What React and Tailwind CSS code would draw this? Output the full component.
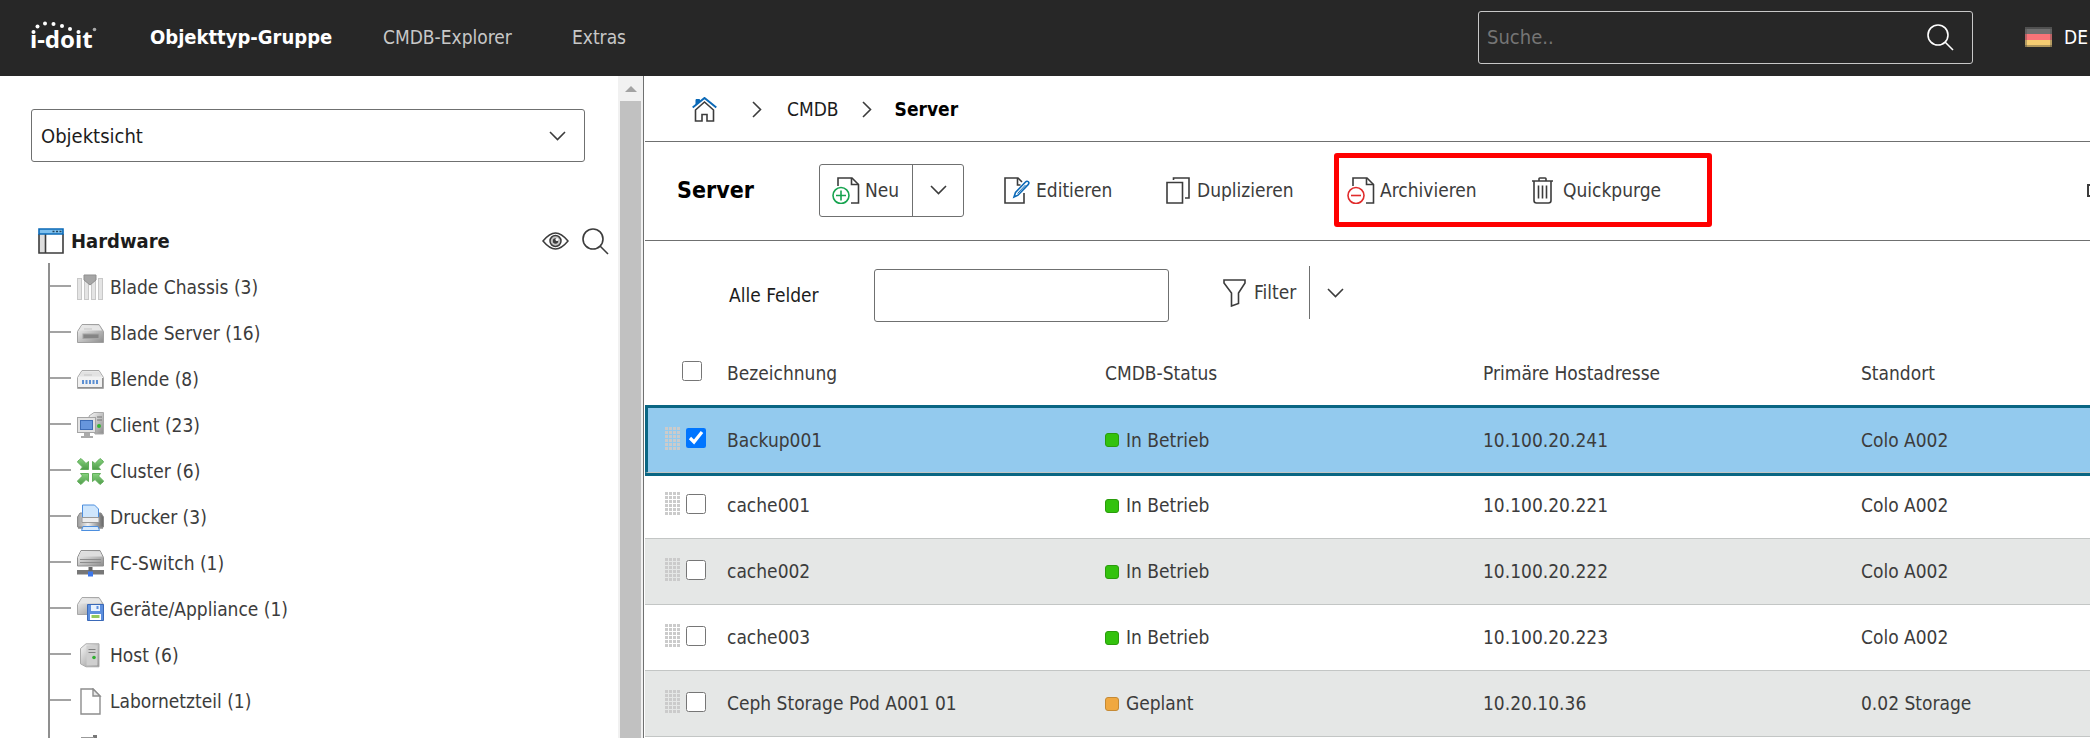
import { useState } from 'react'

const OBJECT_TYPES = [
  { name: 'Blade Chassis', count: 3, icon: ChassisIcon },
  { name: 'Blade Server', count: 16, icon: BladeServerIcon },
  { name: 'Blende', count: 8, icon: PanelIcon },
  { name: 'Client', count: 23, icon: ClientIcon },
  { name: 'Cluster', count: 6, icon: ClusterIcon },
  { name: 'Drucker', count: 3, icon: PrinterIcon },
  { name: 'FC-Switch', count: 1, icon: SwitchIcon },
  { name: 'Geräte/Appliance', count: 1, icon: ApplianceIcon },
  { name: 'Host', count: 6, icon: HostIcon },
  { name: 'Labornetzteil', count: 1, icon: BlankPageIcon },
]

const SERVERS = [
  { name: 'Backup001', status: 'In Betrieb', ip: '10.100.20.241', location: 'Colo A002' },
  { name: 'cache001', status: 'In Betrieb', ip: '10.100.20.221', location: 'Colo A002' },
  { name: 'cache002', status: 'In Betrieb', ip: '10.100.20.222', location: 'Colo A002' },
  { name: 'cache003', status: 'In Betrieb', ip: '10.100.20.223', location: 'Colo A002' },
  { name: 'Ceph Storage Pod A001 01', status: 'Geplant', ip: '10.20.10.36', location: '0.02 Storage' },
]

const STATUS_COLORS = {
  'In Betrieb': 'bg-[#33c20d] border-[#2a9c0c]',
  Geplant: 'bg-[#f0a840] border-[#c58a35]',
}

/* ---------- Icons ---------- */

function Logo() {
  return (
    <svg width="72" height="40" viewBox="0 0 72 40" fill="#fff" role="img" aria-label="i-doit">
      <text x="0" y="31" fontFamily="Noto Sans, sans-serif" fontWeight="700" fontSize="24">ı-doıt</text>
      <circle cx="3.500" cy="15" r="2" />
      <circle cx="7.500" cy="9.500" r="2" />
      <circle cx="15" cy="6.500" r="2" />
      <circle cx="23.500" cy="7" r="2" />
      <circle cx="32" cy="9" r="2" />
      <circle cx="40" cy="12" r="2" />
      <circle cx="48.500" cy="15" r="2" />
      <circle cx="64.500" cy="12.500" r="1.800" fill="#aaa" />
    </svg>
  )
}

function SearchIcon({ className }) {
  return (
    <svg width="27" height="27" viewBox="0 0 27 27" fill="none" stroke="currentColor" strokeWidth="1.600" className={className}>
      <circle cx="11" cy="11" r="10" />
      <path d="M18 18l8 8" />
    </svg>
  )
}

function EyeIcon() {
  return (
    <svg width="27" height="18" viewBox="0 0 27 18" fill="none" stroke="#3c3c3c" strokeWidth="1.500">
      <path d="M1 9C6 3 9.500 1 13.500 1S21 3 26 9c-5 6-8.500 8-12.500 8S6 15 1 9z" />
      <circle cx="13.500" cy="9" r="5.500" fill="#c4c4c4" />
      <circle cx="13.500" cy="9" r="2.700" fill="#3c3c3c" stroke="none" />
      <circle cx="15" cy="7.500" r="1.500" fill="#fff" stroke="none" />
    </svg>
  )
}

function ChevronDown({ className }) {
  return (
    <svg width="17" height="10" viewBox="0 0 17 10" fill="none" stroke="#3c3c3c" strokeWidth="1.600" className={className}>
      <path d="M1 1l7.500 7.500L16 1" />
    </svg>
  )
}

function ChevronRight() {
  return (
    <svg width="10" height="17" viewBox="0 0 10 17" fill="none" stroke="#3c3c3c" strokeWidth="1.600">
      <path d="M1 1l7.500 7.500L1 16" />
    </svg>
  )
}

function FlagDe() {
  return (
    <svg width="27" height="20" viewBox="0 0 27 20">
      <rect width="27" height="7" fill="#707070" />
      <rect y="7" width="27" height="6" fill="#f77478" />
      <rect y="13" width="27" height="7" fill="#f5cc72" />
      <path d="M1 20V1h25v19" fill="none" stroke="#444" strokeWidth="2" opacity=".350" />
      <path d="M0 1h27M0 19h27" stroke="#333" strokeWidth="2" opacity=".350" />
    </svg>
  )
}

function HomeIcon() {
  return (
    <svg width="25" height="25" viewBox="0 0 25 25" fill="none" strokeWidth="1.600">
      <path d="M3.500 13v11H10v-6.500h5V24h6.500V13L12.500 5z" stroke="#3c3c3c" />
      <path d="M.7 10.500L12.500 1l11.800 9.500" stroke="#0b69b7" strokeWidth="2" />
      <path d="M4 7.500V2.500h3.500v2z" fill="#0b69b7" stroke="#0b69b7" strokeWidth="1" />
    </svg>
  )
}

function NewIcon() {
  return (
    <svg width="28" height="27" viewBox="0 0 28 27" fill="none" strokeWidth="1.600">
      <path d="M6 9V1h14l6.500 6.500V26H19" stroke="#3c3c3c" />
      <path d="M19.500 1v6.500h7" stroke="#3c3c3c" />
      <circle cx="9" cy="18.500" r="8" stroke="#16a34f" />
      <path d="M9 13.500v10M4 18.500h10" stroke="#16a34f" />
    </svg>
  )
}

function ArchiveIcon() {
  return (
    <svg width="28" height="27" viewBox="0 0 28 27" fill="none" strokeWidth="1.600">
      <path d="M6 9V1h14l6.500 6.500V26H19" stroke="#3c3c3c" />
      <path d="M19.500 1v6.500h7" stroke="#3c3c3c" />
      <circle cx="9" cy="18.500" r="8" stroke="#e02b2b" />
      <path d="M4 18.500h10" stroke="#e02b2b" />
    </svg>
  )
}

function EditIcon() {
  return (
    <svg width="26" height="27" viewBox="0 0 26 27" fill="none" strokeWidth="1.600">
      <path d="M20 16v10H1V1h13l4 4" stroke="#3c3c3c" />
      <path d="M13.500 1v7h3" stroke="#3c3c3c" />
      <path d="M10 20l1.500-4.500L21.500 5c1-1 2-1 2.800-.2s.7 1.800-.2 2.800L14 18.200z" stroke="#0b69b7" />
      <path d="M13.500 16.500l8-8.500" stroke="#0b69b7" strokeWidth="1" />
    </svg>
  )
}

function DuplicateIcon() {
  return (
    <svg width="24" height="27" viewBox="0 0 24 27" fill="none" stroke="#3c3c3c" strokeWidth="1.600">
      <path d="M1 5.500h15.500V26H1z" />
      <path d="M7.500 3V1H23v20h-4" />
    </svg>
  )
}

function TrashIcon() {
  return (
    <svg width="21" height="27" viewBox="0 0 21 27" fill="none" stroke="#3c3c3c" strokeWidth="1.600">
      <path d="M0 4h21M7 4V1.800Q7 1 7.800 1h5.400q.8 0 .8.800V4M2 4v19.500Q2 26 4.500 26h12q2.500 0 2.500-2.500V4" />
      <path d="M6.500 8.500v13M10.500 8.500v13M14.500 8.500v13" />
    </svg>
  )
}

function FilterIcon() {
  return (
    <svg width="23" height="28" viewBox="0 0 23 28" fill="none" stroke="#3c3c3c" strokeWidth="1.600">
      <path d="M1 1h21v3l-6.500 10v10.500L8.500 27V14L1 4z" />
    </svg>
  )
}

function GroupIcon() {
  return (
    <svg width="26" height="26" viewBox="0 0 26 26" fill="none">
      <path d="M1 6h6v19H1z" fill="#dedede" />
      <path d="M1 6v19h24V6M7.500 6v19" stroke="#3c3c3c" strokeWidth="1.600" />
      <path d="M1 1h24v5H1z" fill="#7ec0ee" stroke="#0b69b7" strokeWidth="1.600" />
      <path d="M14.500 3.500h2M18 3.500h2M21.500 3.500h2" stroke="#23455e" strokeWidth="1.500" />
    </svg>
  )
}

function Gradients() {
  return (
    <svg width="0" height="0" className="absolute" aria-hidden="true">
      <defs>
        <linearGradient id="metal" x1="0" y1="0" x2="1" y2="1">
          <stop offset="0" stopColor="#fafafa" />
          <stop offset="1" stopColor="#8c8c8c" />
        </linearGradient>
        <linearGradient id="metalH" x1="0" y1="0" x2="1" y2="0">
          <stop offset="0" stopColor="#999" />
          <stop offset=".400" stopColor="#f0f0f0" />
          <stop offset="1" stopColor="#666" />
        </linearGradient>
        <linearGradient id="green" x1="0" y1="0" x2="0" y2="1">
          <stop offset="0" stopColor="#86d37e" />
          <stop offset="1" stopColor="#4f9c4a" />
        </linearGradient>
      </defs>
    </svg>
  )
}

function ChassisIcon() {
  return (
    <svg width="27" height="27" viewBox="0 0 27 27">
      {[0, 7, 14, 21].map((x) => (
        <rect key={x} x={x + 0.5} y="4.500" width="4" height="21" fill="#e4e4e4" stroke="#c8c8c8" />
      ))}
      <path d="M7 1h12v5l-6 5-6-5z" fill="#a6a6a6" stroke="#8f8f8f" />
    </svg>
  )
}

function BladeServerIcon() {
  return (
    <svg width="27" height="19" viewBox="0 0 27 19">
      <path d="M5 .5h17l4.500 7v11H.5v-11z" fill="url(#metal)" stroke="#a0a0a0" />
      <path d="M5 1.500h17l3 5H2z" fill="#e6e6e6" />
      <path d="M7 5h8" stroke="#c5c5c5" />
      <rect x="6" y="10" width="16" height="4.500" fill="#858585" stroke="#a5a5a5" />
    </svg>
  )
}

function PanelIcon() {
  return (
    <svg width="27" height="19" viewBox="0 0 27 19">
      <path d="M5 .5h17l4.500 7v11H.5v-11z" fill="#f1f1f1" stroke="#a8a8a8" />
      <path d="M5 1.500h17l3 5H2z" fill="#e2e2e2" />
      <path d="M7 5h8" stroke="#c5c5c5" />
      <path d="M6 10v4M9.500 10v4M13 10v4M16.500 10v4M20 10v4" stroke="#5c8fd2" strokeWidth="2" />
      <path d="M1 17.500h25M25.500 8v10" stroke="#8f8f8f" />
    </svg>
  )
}

function ClientIcon() {
  return (
    <svg width="27" height="27" viewBox="0 0 27 27">
      <path d="M12 4l5-3.500h9.500V22H18z" fill="url(#metal)" stroke="#aaa" />
      <path d="M20 5h5M20 8h5" stroke="#777" />
      <circle cx="22" cy="14" r="2" fill="#33b533" />
      <rect x=".5" y="5.500" width="18" height="15" fill="#e2e2e2" stroke="#a5a5a5" />
      <rect x="3.500" y="8.500" width="12" height="9" fill="#6796dc" stroke="#3d6cb5" />
      <path d="M7 21h6v3h3v2H4v-2h3z" fill="#aaa" />
    </svg>
  )
}

function ClusterIcon() {
  return (
    <svg width="27" height="27" viewBox="0 0 27 27" fill="url(#green)" stroke="#63ae5c">
      <path d="M1 3l3-2.500 5 5 2.500-2v8h-8l2-2.500-5-5z" />
      <path d="M26 3l-3-2.500-5 5-2.500-2v8h8l-2-2.500 5-5z" />
      <path d="M1 24l3 2.500 5-5 2.500 2v-8h-8l2 2.500-5 5z" />
      <path d="M26 24l-3 2.500-5-5-2.500 2v-8h8l-2 2.500 5 5z" />
    </svg>
  )
}

function PrinterIcon() {
  return (
    <svg width="27" height="27" viewBox="0 0 27 27">
      <path d="M3 9l-2.500 4v10h26V13L24 9z" fill="url(#metalH)" stroke="#8a8a8a" />
      <path d="M5.500 15V1h12l4 4v10z" fill="#cfe6fc" stroke="#4c8ede" />
      <path d="M5 13.500h17v5H5z" fill="#ededed" stroke="#999" />
      <path d="M1 24h25" stroke="#555" />
      <path d="M6 22.500h15l1.500 4h-18z" fill="#d8eafc" stroke="#4c8ede" />
    </svg>
  )
}

function SwitchIcon() {
  return (
    <svg width="27" height="27" viewBox="0 0 27 27">
      <path d="M4 .5h19l3.500 7V16H.5V7.500z" fill="url(#metal)" stroke="#8f8f8f" />
      <path d="M4 1.500h19l2.500 5h-24z" fill="#dedede" />
      <path d="M3 9.500h21M3 12.500h21" stroke="#8b8b8b" />
      <path d="M0 20h27v4.500H0z" fill="#777" />
      <path d="M11.500 17h4v4h-4z" fill="#666" />
      <rect x="11" y="21.500" width="5" height="5" fill="#3b77ec" />
    </svg>
  )
}

function ApplianceIcon() {
  return (
    <svg width="27" height="24" viewBox="0 0 27 24">
      <path d="M5 .5h17l4.500 7v10H.5v-10z" fill="url(#metal)" stroke="#a8a8a8" />
      <path d="M5 1.500h17l3 5H2z" fill="#e6e6e6" />
      <path d="M10.500 7.500h16v16h-16z" fill="#5d8fde" stroke="#3a69b8" />
      <path d="M14 8h9v6h-9z" fill="#e9f2fd" />
      <path d="M19.500 9h2v3h-2z" fill="#5d8fde" />
      <path d="M13 17h11v6H13z" fill="#fff" />
      <path d="M14.500 19.500h8" stroke="#93c95b" strokeWidth="3" />
    </svg>
  )
}

function HostIcon() {
  return (
    <svg width="27" height="25" viewBox="0 0 27 25">
      <path d="M9 .8h13v23H9l-5.500-3V5.500z" fill="url(#metal)" stroke="#aaa" />
      <path d="M9.500 2.500h11v20h-11z" fill="#cfcfcf" />
      <path d="M11.500 6.500h7M11.500 9.500h7" stroke="#808080" />
      <circle cx="17" cy="14.500" r="1.800" fill="#2fae2f" />
    </svg>
  )
}

function BlankPageIcon() {
  return (
    <svg width="27" height="27" viewBox="0 0 27 27" fill="#fff" stroke="#8d8d8d" strokeWidth="1.400">
      <path d="M4 1h12l7 7v18H4z" />
      <path d="M16 1v7h7z" fill="#e8e8e8" />
    </svg>
  )
}

function NetIcon() {
  return (
    <svg width="27" height="22" viewBox="0 0 27 22">
      <path d="M16 0h4v12h-4z" fill="#777" />
      <path d="M4 2h13v12H4z" fill="#999" />
    </svg>
  )
}

function DragHandle() {
  return (
    <svg width="16" height="23" viewBox="0 0 16 23" fill="#cbcbcb" aria-hidden="true">
      {[0, 4, 8, 12, 16, 20].map((y) =>
        [0, 4, 8, 12].map((x) => <rect key={`${x}-${y}`} x={x} y={y} width="3" height="3" />)
      )}
    </svg>
  )
}

/* ---------- Layout ---------- */

function TopBar() {
  return (
    <header className="flex h-[76px] shrink-0 items-center bg-[#272727] pb-[2px] text-[19px]">
      <a href="#start" className="ml-[30px] shrink-0"><Logo /></a>
      <nav className="ml-[48px] flex items-center whitespace-nowrap text-[#c8c8c8]">
        <a href="#gruppe" className="w-[233px] text-[20px] font-bold text-white">Objekttyp-Gruppe</a>
        <a href="#explorer" className="w-[189px]">CMDB-Explorer</a>
        <a href="#extras">Extras</a>
      </nav>
      <form className="mr-[52px] ml-auto flex h-[53px] w-[495px] items-center rounded-[3px] border border-[#c8c8c8] pr-[18px] pl-2">
        <input aria-label="Suche" placeholder="Suche.." className="min-w-0 flex-1 bg-transparent text-[20px] text-white outline-none placeholder:text-[#757575]" />
        <button type="button" aria-label="Suchen" className="text-white"><SearchIcon /></button>
      </form>
      <button className="flex w-[65px] shrink-0 items-center gap-[12px] text-white">
        <FlagDe />
        <span>DE</span>
      </button>
    </header>
  )
}

function Sidebar() {
  return (
    <aside className="flex w-[645px] shrink-0">
      <div className="min-w-0 flex-1 overflow-hidden pt-[33px] pr-[33px] pl-[31px]">
        <div className="relative flex items-center">
          <select aria-label="Ansicht" className="h-[53px] w-full appearance-none rounded-[3px] border border-[#6f7070] bg-white px-[9px] text-[20px] text-[#1c1c1c]">
            <option>Objektsicht</option>
          </select>
          <ChevronDown className="pointer-events-none absolute right-[19px]" />
        </div>

        <div className="mt-[58px] mb-px flex h-[42px] items-center pl-[7px]">
          <GroupIcon />
          <h2 className="ml-[7px] text-[20px] font-bold text-[#1c1c1c]">Hardware</h2>
          <button aria-label="Anzeigen" className="ml-auto"><EyeIcon /></button>
          <button aria-label="Suchen" className="-mr-6 ml-[13px] text-[#3c3c3c]"><SearchIcon /></button>
        </div>

        <ul className="ml-[17px] border-l-2 border-[#8f8f8f]">
          {OBJECT_TYPES.map(({ name, count, icon: Icon }) => (
            <li key={name} className="flex h-[46px] items-center">
              <span className="h-[2px] w-[21px] bg-[#a3a3a3]" />
              <a href="#typ" className="ml-[6px] flex items-center gap-[6px] pt-[2px] text-[19px] text-[#3c3c3c]">
                <Icon />
                {name} ({count})
              </a>
            </li>
          ))}
          <li className="flex h-[46px] items-center pl-[27px]">
            <a href="#typ" aria-label="Weitere"><NetIcon /></a>
          </li>
        </ul>
      </div>

      <div className="flex w-[25px] flex-col items-center bg-[#f1f1f1]">
        <svg width="12" height="25" viewBox="0 0 12 25"><path d="M0 16l6-6 6 6z" fill="#a3a3a3" /></svg>
        <div className="w-[21px] flex-1 bg-[#c1c1c1]" />
      </div>
      <div className="mr-px w-px bg-[#6f7070]" />
    </aside>
  )
}

function Breadcrumb() {
  return (
    <nav className="flex h-[66px] items-center border-b border-[#6f7070] pt-[2px] pl-[47px] text-[19px] text-[#1c1c1c]">
      <a href="#home" aria-label="Home" className="mr-[35px]"><HomeIcon /></a>
      <ChevronRight />
      <a href="#cmdb" className="mr-[23px] ml-[25px]">CMDB</a>
      <ChevronRight />
      <span className="ml-[23px] font-bold text-black">Server</span>
    </nav>
  )
}

function Toolbar() {
  return (
    <div className="flex h-[99px] items-center border-b border-[#6f7070] pb-[2px] pl-[32px] text-[19px] whitespace-nowrap text-[#3c3c3c]">
      <h1 className="w-[142px] text-[23px] font-bold text-black">Server</h1>
      <div className="mr-[40px] flex h-[53px] w-[145px] rounded-[3px] border border-[#6f7070]">
        <button className="flex flex-1 items-center gap-[5px] border-r border-[#6f7070] pl-[12px]"><NewIcon />Neu</button>
        <button aria-label="Mehr" className="flex w-[50px] items-center justify-center"><ChevronDown /></button>
      </div>
      <button className="flex w-[162px] items-center gap-[6px]"><EditIcon />Editieren</button>
      <button className="flex w-[168px] items-center gap-[7px]"><DuplicateIcon />Duplizieren</button>
      <div className="flex h-[74px] w-[378px] items-center rounded-[3px] border-5 border-[#ff0000] pl-[8px]">
        <button className="flex w-[185px] items-center gap-[5px]"><ArchiveIcon />Archivieren</button>
        <button className="flex items-center gap-[10px]"><TrashIcon />Quickpurge</button>
      </div>
      <button aria-label="Drucken" className="ml-auto h-[13px] w-[3px] border-2 border-r-0 border-[#3c3c3c]" />
    </div>
  )
}

function FilterBar() {
  return (
    <div className="flex items-center pt-[25px] pb-[13px] pl-[84px] text-[19px]">
      <label htmlFor="alle-felder" className="w-[145px] text-[#1c1c1c]">Alle Felder</label>
      <input id="alle-felder" className="h-[53px] w-[295px] rounded-[3px] border border-[#6f7070] px-2" />
      <div className="mb-[6px] ml-[54px] flex h-[53px] items-center text-[#3c3c3c]">
        <button className="flex h-full items-center gap-[8px] border-r border-[#6f7070] pr-[13px]"><FilterIcon />Filter</button>
        <button aria-label="Filteroptionen" className="ml-[17px]"><ChevronDown /></button>
      </div>
    </div>
  )
}

function ServerTable() {
  const [selected, setSelected] = useState(['Backup001'])

  const toggle = (name) => {
    setSelected((prev) => (prev.includes(name) ? prev.filter((n) => n !== name) : [...prev, name]))
  }

  return (
    <table className="w-full table-fixed border-separate border-spacing-0 text-left text-[19px] text-[#3c3c3c]">
      <colgroup>
        <col className="w-[65px]" />
        <col className="w-[378px]" />
        <col className="w-[378px]" />
        <col className="w-[378px]" />
        <col />
      </colgroup>
      <thead>
        <tr className="h-[70px]">
          <th className="pl-[37px]"><input type="checkbox" aria-label="Alle auswählen" className="mb-1 block size-5" /></th>
          <th className="pl-[17px] font-normal">Bezeichnung</th>
          <th className="pl-[17px] font-normal">CMDB-Status</th>
          <th className="pl-[17px] font-normal">Primäre Hostadresse</th>
          <th className="pl-[17px] font-normal">Standort</th>
        </tr>
      </thead>
      <tbody>
        {SERVERS.map((s) => {
          const active = selected.includes(s.name)
          return (
            <tr
              key={s.name}
              className={active ? 'h-[65px] bg-[#93caee] outline-3 outline-[#0a6683]' : 'h-[66px] odd:bg-[#e5e7e6]'}
            >
              <td className={active ? 'border-b border-l-3 border-b-[#c3c6c5] border-l-[#0a6683] pl-[17px]' : 'border-b border-[#c3c6c5] pl-[20px]'}>
                <div className="mb-1 flex items-center gap-[5px]">
                  <DragHandle />
                  <input type="checkbox" aria-label={s.name} checked={active} onChange={() => toggle(s.name)} className="size-5" />
                </div>
              </td>
              <td className="border-b border-[#c3c6c5] pl-[17px]">{s.name}</td>
              <td className="border-b border-[#c3c6c5] pl-[17px]">
                <span className="flex items-center gap-[7px]">
                  <span className={`size-[14px] rounded-[3px] border ${STATUS_COLORS[s.status]}`} />
                  {s.status}
                </span>
              </td>
              <td className="border-b border-[#c3c6c5] pl-[17px]">{s.ip}</td>
              <td className="border-b border-[#c3c6c5] pl-[17px]">{s.location}</td>
            </tr>
          )
        })}
      </tbody>
    </table>
  )
}

export default function App() {
  return (
    <div className="flex h-screen flex-col overflow-hidden bg-white font-['DejaVu_Sans_Condensed','Noto_Sans',sans-serif]">
      <Gradients />
      <TopBar />
      <div className="flex min-h-0 flex-1">
        <Sidebar />
        <main className="min-w-0 flex-1 overflow-hidden">
          <Breadcrumb />
          <Toolbar />
          <FilterBar />
          <ServerTable />
        </main>
      </div>
    </div>
  )
}
